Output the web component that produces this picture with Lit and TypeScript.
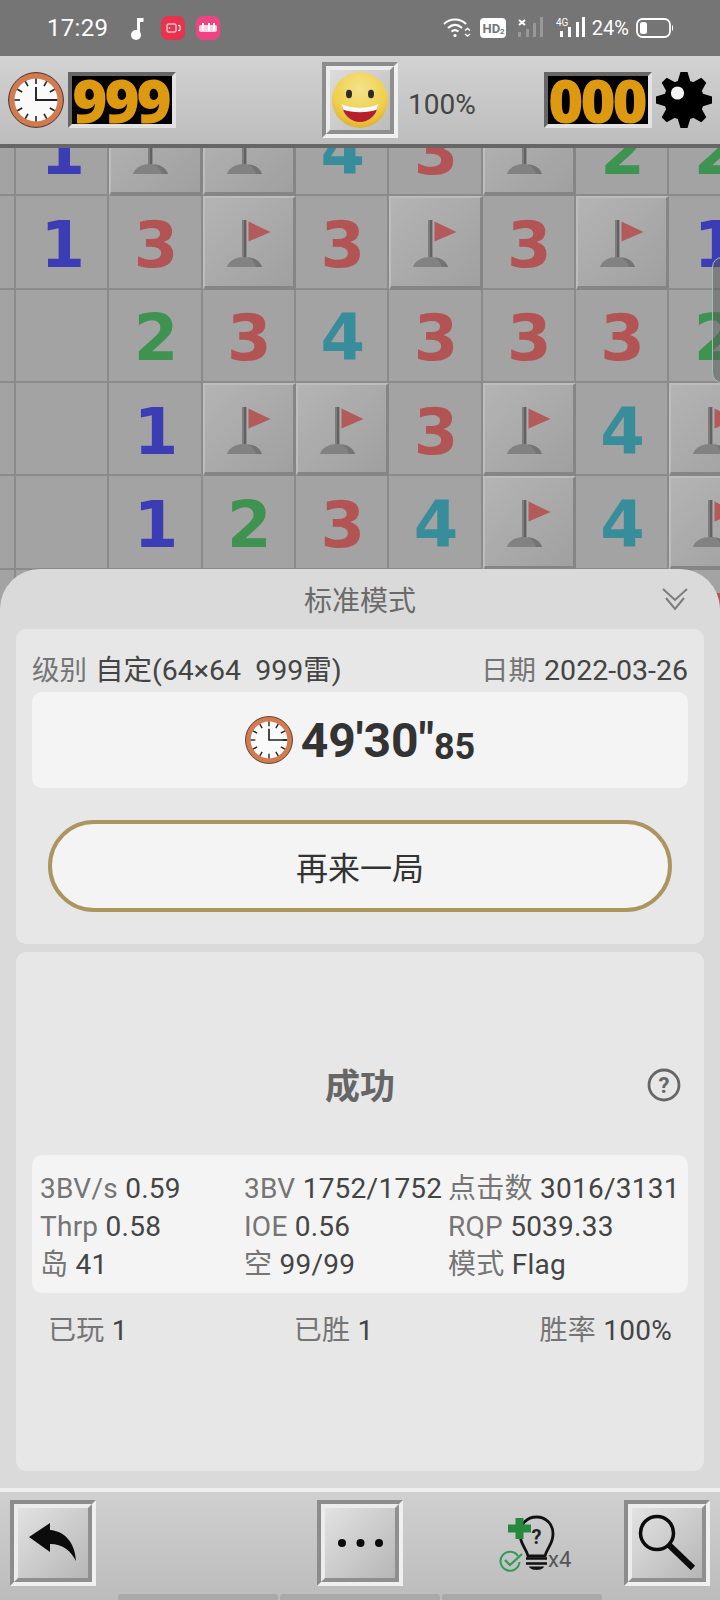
import { LitElement, html, css, svg } from "lit";
import { customElement } from "lit/decorators.js";

const B = [
  "_1FF43F22",
  "_13F3F3F1",
  "__2343332",
  "__1FF3F4F",
  "__1234F4F",
  "__1111113",
];

const clock = (size: number) => html`<svg class="clock" width=${size} height=${size} viewBox="0 0 56 56">
  <circle cx="28" cy="28" r="27.4" fill="#d17b4f" stroke="#4a3328" stroke-width="1"/>
  <circle cx="28" cy="28" r="21.5" fill="#fafafa"/>
  ${[0, 30, 60, 90, 120, 150, 180, 210, 240, 270, 300, 330].map(
    (a) => svg`<line x1="28" y1="6.5" x2="28" y2="12" stroke="#222" stroke-width="1.6" transform="rotate(${a} 28 28)"/>`
  )}
  <path d="M28 15V28H49" fill="none" stroke="#222" stroke-width="1.9"/>
</svg>`;

const flag = html`<svg class="flag" viewBox="0 0 93 93" width="93" height="93">
  <rect x="41" y="25" width="2.2" height="37" fill="#7d7d7d"/>
  <rect x="43" y="25" width="2.4" height="37" fill="#616161"/>
  <path d="M47.5 26.5L69.5 37L47.5 46.5Z" fill="#b35a5a"/>
  <path d="M26 72C28 65 36 62 43 62C53 62 59 66 61 72Z" fill="#828282"/>
  <path d="M47 62.5C54 63 59 66 61 72H55C54 68 51 64 47 62.5Z" fill="#747474"/>
</svg>`;

const gear = html`<svg width="56" height="56" viewBox="0 0 56 56">
  <g fill="#000">
    <circle cx="28" cy="28" r="20"/>
    ${[0, 45, 90, 135, 180, 225, 270, 315].map(
      (a) => svg`<path d="M21.5 10L24.5 0H31.5L34.5 10Z" transform="rotate(${a} 28 28)"/>`
    )}
  </g>
  <circle cx="21.5" cy="21" r="6.6" fill="#f4f4f4"/>
</svg>`;

const smile = html`<svg width="56" height="56" viewBox="0 0 56 56">
  <defs>
    <radialGradient id="sm" cx="0.5" cy="0.3" r="0.75">
      <stop offset="0" stop-color="#f4e38c"/><stop offset="0.65" stop-color="#efcf48"/><stop offset="1" stop-color="#dfa92c"/>
    </radialGradient>
  </defs>
  <circle cx="28" cy="28" r="28" fill="url(#sm)"/>
  <ellipse cx="17" cy="22" rx="3" ry="4.200" fill="#2a2a2a"/>
  <ellipse cx="39" cy="22" rx="3" ry="4.200" fill="#2a2a2a"/>
  <path d="M10 33C20 38 36 38 46 33C45 43 37 50 28 50C19 50 11 43 10 33Z" fill="#b31f2a"/>
  <path d="M9.500 32C20 37 36 37 46.500 32L45 37.500C36 41 20 41 11 37.500Z" fill="#fafafa"/>
</svg>`;

@customElement("app-root")
export class AppRoot extends LitElement {
  static styles = css`
    :host { display: block; width: 720px; height: 1600px; overflow: hidden; font-family: Roboto, "Noto Sans CJK SC", sans-serif; background: #a3a3a3; }
    .page { display: flex; flex-direction: column; height: 1600px; }
    .status { height: 56px; flex: none; background: #757575; display: flex; align-items: center; color: #fff; padding: 0 0 0 47px; box-sizing: border-box; }
    .time { font-size: 24px; width: 81px; letter-spacing: 0.3px; margin-top: -1px; }
    .status-left { display: flex; align-items: center; gap: 11px; }
    .status-right { margin-left: auto; display: flex; align-items: center; padding-right: 46px; }
    .s-hd { margin-left: 9px; }
    .s-sig { margin-left: 12px; }
    .pct { font-size: 20px; margin: 0 7px 0 6px; }
    .bar { height: 88px; flex: none; background: linear-gradient(#d2d2d2, #bdbdbd); display: flex; align-items: center; box-sizing: border-box; padding: 0 8px; }
    .barline { height: 4px; flex: none; background: #666; }
    .counter { width: 108px; height: 56px; box-sizing: border-box; border-style: solid; border-width: 4px; border-color: #666 #e2e2e2 #e2e2e2 #666; background: #000; color: #dd9a11; font: 800 60px/48px "Open Sans", sans-serif; letter-spacing: -3px; padding-right: 3px; display: flex; align-items: center; justify-content: center; white-space: nowrap; }
    .left-count { margin-left: 4px; }
    .face { margin-left: 146px; width: 76px; height: 76px; box-sizing: border-box; border-style: solid; border-width: 4px; border-color: #8c8c8c #f0f0f0 #f0f0f0 #8c8c8c; display: flex; }
    .face-in { flex: 1; display: flex; align-items: center; justify-content: center; border-style: solid; border-width: 4px; border-color: #ececec #8f8f8f #8f8f8f #ececec; background: linear-gradient(135deg, #dcdcdc, #bcbcbc); }
    .zoom { font-size: 28px; color: #444; margin: 8px 0 0 10px; width: 136px; }
    .gear { margin-left: 4px; display: flex; }
    .main { flex: 1; position: relative; overflow: hidden; }
    .board { display: grid; grid-template-columns: repeat(9, 93.33px); grid-auto-rows: 93.33px; margin: -45px 0 0 -77.33px; }
    .cell { box-sizing: border-box; background: #a3a3a3; border-right: 2px solid #8b8b8b; border-bottom: 2px solid #8b8b8b; display: flex; align-items: center; justify-content: center; font: 700 64px/1 "DejaVu Sans", sans-serif; padding: 6px 0 0 2px; }
    .n1 { color: #3c3cb4; } .n2 { color: #3e9350; } .n3 { color: #b35454; } .n4 { color: #388d9a; }
    .closed { border-style: solid; border-width: 2px 3px 4px 2px; border-color: #bdbdbd #858585 #858585 #bdbdbd; background: linear-gradient(135deg, #b4b4b4, #a0a0a0); padding: 0; position: relative; }
    .flag { position: absolute; left: -4px; top: -3px; }
    .handle { position: absolute; left: 712px; top: 109px; width: 20px; height: 126px; box-sizing: border-box; border: 1.5px solid #9cc0b4; border-radius: 10px; background: rgba(90, 90, 90, 0.5); }
    .sheet { position: absolute; left: 0; right: 0; top: 421px; bottom: 0; background: #dadada; border-radius: 40px 40px 0 0; box-sizing: border-box; padding: 0 16px; display: flex; flex-direction: column; }
    .sheet-head { height: 60px; flex: none; display: flex; align-items: center; justify-content: center; position: relative; color: #6a6a6a; font-size: 28px; }
    .chev { position: absolute; right: 16px; top: 19px; }
    .panel { background: #e7e7e7; border-radius: 10px; box-sizing: border-box; }
    .p1 { height: 315px; padding: 21px 16px 0; display: flex; flex-direction: column; }
    .info { display: flex; justify-content: space-between; font-size: 28.5px; line-height: 41px; color: #444; height: 42px; white-space: nowrap; }
    .lbl { color: #757575; }
    .info .lbl { font-size: 27.5px; margin-right: 1px; }
    .timebox { height: 96px; background: #f4f4f4; border-radius: 10px; display: flex; align-items: center; justify-content: center; color: #333; font-weight: 700; font-size: 48px; }
    .timebox .clock { margin-right: 8px; }
    .timebox small { font-size: 36px; align-self: flex-end; margin: 0 0 20px 0; }
    .again { margin: 32px 16px 0; height: 92px; border: 4px solid #ab9660; border-radius: 46px; background: #f4f4f4; box-sizing: border-box; display: flex; align-items: center; justify-content: center; font-size: 32px; color: #333; }
    .p2 { margin-top: 8px; height: 519px; padding: 0 16px; display: flex; flex-direction: column; }
    .result { height: 203px; flex: none; padding-top: 103px; box-sizing: border-box; position: relative; text-align: center; font-weight: 700; font-size: 35px; line-height: 66px; color: #666; }
    .help { position: absolute; right: 7px; top: 116px; display: flex; }
    .stats { height: 138px; flex: none; background: #f4f4f4; border-radius: 10px; display: grid; grid-template-columns: 204px 204px 1fr; grid-auto-rows: 38px; align-content: start; padding: 15px 0 0 8px; box-sizing: border-box; font-size: 28px; line-height: 38px; color: #444; white-space: nowrap; letter-spacing: 0.25px; }
    .foot { display: flex; justify-content: space-between; padding: 18px 16px 0; font-size: 28px; line-height: 40px; color: #444; letter-spacing: 0.25px; }
    .bottom { position: absolute; left: 0; right: 0; bottom: 0; height: 112px; background: linear-gradient(#d0d0d0, #bcbcbc); border-top: 4px solid #f0f0f0; box-sizing: border-box; padding: 8px 10px 0; display: flex; align-items: flex-start; }
    .btn { width: 86px; height: 86px; box-sizing: border-box; border-style: solid; border-width: 4px; border-color: #8c8c8c #f0f0f0 #f0f0f0 #8c8c8c; display: flex; flex: none; }
    .btn-in { flex: 1; display: flex; align-items: center; justify-content: center; border-style: solid; border-width: 4px; border-color: #ececec #8f8f8f #8f8f8f #ececec; background: linear-gradient(135deg, #e2e2e2, #b6b6b6); }
    .more { margin-left: 221px; }
    .hint { margin-left: 93px; width: 110px; height: 80px; display: flex; align-items: flex-start; position: relative; flex: none; }
    .hint svg { margin-top: 10px; }
    .x4 { position: absolute; left: 52px; top: 47px; font-size: 22px; line-height: 26px; color: #555; }
    .search { margin-left: auto; }
    .nav { position: absolute; left: 118px; bottom: 0; display: flex; gap: 2px; }
    .nav i { display: block; width: 160px; height: 6px; background: #a9a9a9; border-radius: 3px 3px 0 0; }
  `;

  private cell(c: string) {
    if (c === "F") return html`<div class="cell closed">${flag}</div>`;
    if (c === "_") return html`<div class="cell"></div>`;
    return html`<div class="cell n${c}">${c}</div>`;
  }

  private stat(l: string, v: string) {
    return html`<div><span class="lbl">${l}</span> ${v}</div>`;
  }

  render() {
    return html`<div class="page">
      <div class="status">
        <div class="time">17:29</div>
        <div class="status-left">
          <svg width="22" height="24" viewBox="0 0 22 24"><path d="M9 19V2H15.500V6H12V19.500Z" fill="#fff"/><circle cx="8" cy="19" r="5" fill="#fff"/></svg>
          <svg width="24" height="24" viewBox="0 0 24 24"><rect width="24" height="24" rx="7" fill="#e8324e"/><rect x="6" y="8" width="9" height="8" rx="1" fill="none" stroke="#fff" stroke-width="1"/><circle cx="8.500" cy="12" r="0.800" fill="#fff"/><path d="M17 9.500H19V14.500H17" fill="none" stroke="#fff" stroke-width="1"/></svg>
          <svg width="24" height="24" viewBox="0 0 24 24"><rect width="24" height="24" rx="7" fill="#ee4582"/><rect x="3" y="9" width="18" height="7" rx="2" fill="#fbd3e2"/><rect x="6" y="7" width="2" height="8" fill="#fff"/><rect x="12" y="7" width="2" height="8" fill="#fff"/><rect x="17" y="7" width="2" height="8" fill="#fff"/></svg>
        </div>
        <div class="status-right">
          <svg width="28" height="22" viewBox="0 0 28 22" fill="none" stroke="#fff" stroke-width="2.200"><path d="M1 7C7 1 17 1 23 7"/><path d="M5 11C9.500 7 14.500 7 19 11"/><path d="M8.500 14.500C11 12.500 13 12.500 15.500 14.500"/><circle cx="12" cy="18.500" r="1.600" fill="#fff" stroke="none"/><path d="M22 13.500L24.500 11.500L27 13.500M22 17L24.500 19L27 17" stroke-width="1.500"/></svg>
          <svg class="s-hd" width="26" height="20" viewBox="0 0 26 20"><rect width="26" height="20" rx="4" fill="#fff"/><text x="2.500" y="15" font-family="Roboto" font-weight="700" font-size="13" fill="#757575">HD</text><text x="20" y="16" font-family="Roboto" font-weight="700" font-size="8" fill="#757575">2</text></svg>
          <svg class="s-sig" width="26" height="22" viewBox="0 0 26 22"><path d="M1 3L7 8M7 3L1 8" stroke="#fff" stroke-width="2"/><rect x="0" y="15" width="3" height="5" fill="#989898"/><rect x="8" y="12" width="3" height="8" fill="#989898"/><rect x="15" y="6" width="3" height="14" fill="#989898"/><rect x="22" y="0" width="3" height="20" fill="#989898"/></svg>
          <svg class="s-sig" width="30" height="22" viewBox="0 0 30 22"><text x="0" y="9" font-family="Roboto" font-size="10" fill="#fff">4G</text><rect x="4" y="14" width="3" height="6" fill="#fff"/><rect x="12" y="10" width="3" height="10" fill="#fff"/><rect x="20" y="5" width="3" height="15" fill="#fff"/><rect x="26" y="0" width="3" height="20" fill="#fff"/></svg>
          <span class="pct">24%</span>
          <svg width="38" height="20" viewBox="0 0 38 20"><rect x="1" y="1" width="33" height="18" rx="5.500" fill="none" stroke="#fff" stroke-width="1.800"/><rect x="4" y="4" width="7" height="12" rx="2.500" fill="#fff"/><path d="M36 7C37.500 7.500 37.500 12.500 36 13Z" fill="#fff"/></svg>
        </div>
      </div>
      <div class="bar">
        ${clock(56)}
        <div class="counter left-count">999</div>
        <div class="face"><div class="face-in">${smile}</div></div>
        <div class="zoom">100%</div>
        <div class="counter">000</div>
        <div class="gear">${gear}</div>
      </div>
      <div class="barline"></div>
      <div class="main">
        <div class="board">${B.join("").split("").map((c) => this.cell(c))}</div>
        <div class="handle"></div>
        <div class="sheet">
          <div class="sheet-head">标准模式
            <svg class="chev" width="26" height="23" viewBox="0 0 26 23" fill="none" stroke="#7c7c7c" stroke-width="2"><path d="M1 1L13 12L25 1"/><path d="M4 10L13 21L22 10"/></svg>
          </div>
          <div class="panel p1">
            <div class="info">
              <div><span class="lbl">级别</span>&nbsp;自定(64×64&nbsp;&nbsp;999雷)</div>
              <div><span class="lbl">日期</span>&nbsp;2022-03-26</div>
            </div>
            <div class="timebox">${clock(48)}<span>49'30"</span><small>85</small></div>
            <div class="again">再来一局</div>
          </div>
          <div class="panel p2">
            <div class="result">成功
              <div class="help"><svg width="34" height="34" viewBox="0 0 34 34"><circle cx="17" cy="17" r="15" fill="none" stroke="#666" stroke-width="2.800"/><text x="17" y="25" text-anchor="middle" font-family="Roboto" font-weight="700" font-size="22" fill="#666">?</text></svg></div>
            </div>
            <div class="stats">
              ${this.stat("3BV/s", "0.59")}${this.stat("3BV", "1752/1752")}${this.stat("点击数", "3016/3131")}
              ${this.stat("Thrp", "0.58")}${this.stat("IOE", "0.56")}${this.stat("RQP", "5039.33")}
              ${this.stat("岛", "41")}${this.stat("空", "99/99")}${this.stat("模式", "Flag")}
            </div>
            <div class="foot">
              ${this.stat("已玩", "1")}${this.stat("已胜", "1")}${this.stat("胜率", "100%")}
            </div>
          </div>
        </div>
        <div class="bottom">
          <div class="btn"><div class="btn-in">
            <svg width="48" height="40" viewBox="0 0 48 40"><path d="M0 14L21 0V7C36 8 46 20 47 38C42 28 34 21 21 21V29Z" fill="#0c0c0c"/></svg>
          </div></div>
          <div class="btn more"><div class="btn-in">
            <svg width="51" height="10" viewBox="0 0 51 10" fill="#0c0c0c"><circle cx="7" cy="5" r="4"/><circle cx="25.500" cy="5" r="4"/><circle cx="44" cy="5" r="4"/></svg>
          </div></div>
          <div class="hint">
            <svg width="66" height="64" viewBox="0 0 66 64">
              <path d="M32 46C30 38 24 34 24 24C24 14 31 7 40.500 7C50 7 57 14 57 24C57 34 51 38 49 46Z" fill="none" stroke="#111" stroke-width="2.800"/>
              <path d="M30 48.500H51M30 53.500H51" stroke="#111" stroke-width="2.600"/>
              <path d="M33 56.500H48C47 61 34 61 33 56.500Z" fill="#111"/>
              <text x="40.500" y="34" text-anchor="middle" font-family="Roboto" font-weight="700" font-size="20" fill="#222">?</text>
              <path d="M19.500 8H27.500V14.500H35V22.500H27.500V29H19.500V22.500H12V14.500H19.500Z" fill="#27883f"/>
              <path d="M22 46A9.500 9.500 0 1 0 23.500 52" fill="none" stroke="#2f9a55" stroke-width="2"/>
              <path d="M9 50L14 55L26 44" fill="none" stroke="#2f9a55" stroke-width="2.200"/>
            </svg>
            <span class="x4">x4</span>
          </div>
          <div class="btn search"><div class="btn-in">
            <svg width="60" height="60" viewBox="0 0 60 60" fill="none" stroke="#0c0c0c"><circle cx="20" cy="20" r="16.500" stroke-width="3.500"/><path d="M32 32L56 55" stroke-width="6"/></svg>
          </div></div>
          <div class="nav"><i></i><i></i><i></i></div>
        </div>
      </div>
    </div>`;
  }
}
